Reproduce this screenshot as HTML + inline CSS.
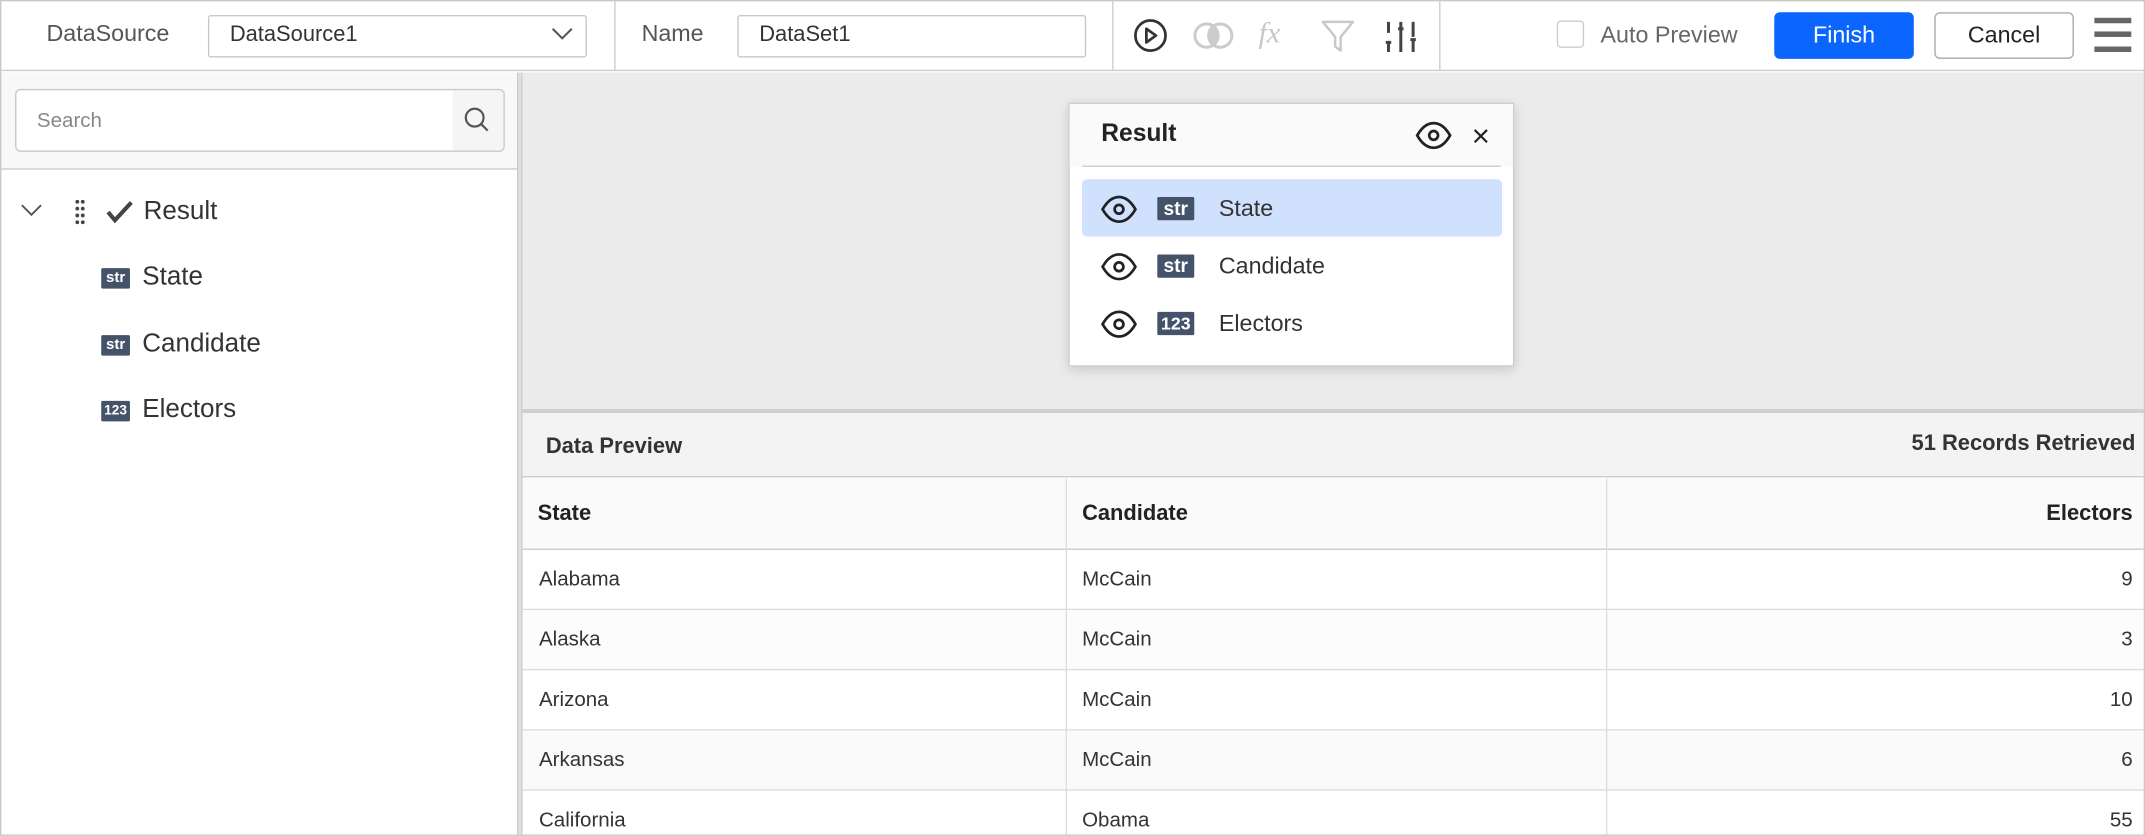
<!DOCTYPE html>
<html><head><meta charset="utf-8"><style>
*{box-sizing:border-box;margin:0;padding:0}
html,body{width:2145px;height:836px;overflow:hidden;background:#fff}
#w{position:absolute;left:0;top:0;width:1568px;height:611px;transform:scale(1.36798);transform-origin:0 0;font-family:"Liberation Sans",sans-serif;color:#333;border:1px solid #c8c8c8;overflow:hidden}
.a{position:absolute}
.badge{position:absolute;background:#44526a;color:#fff;font-size:11px;font-weight:bold;text-align:center;line-height:15px;border-radius:1px}
.row{position:absolute;left:0;width:1186px;height:44px;border-bottom:1px solid #ddd;font-size:15px;color:#333}
.row div{position:absolute;top:0;line-height:43px}
</style></head><body><div id="w">
<!-- toolbar -->
<div class="a" style="left:0;top:0;width:1568px;height:51px;border-bottom:1px solid #ccc;background:#fff"></div>
<div class="a" style="left:33px;top:14px;font-size:17px;color:#555">DataSource</div>
<div class="a" style="left:151px;top:10px;width:277px;height:31px;border:1px solid #c8c8c8;border-radius:2px"></div>
<div class="a" style="left:167px;top:16px;font-size:16px;color:#333">DataSource1</div>
<svg class="a" style="left:401px;top:18px" width="18" height="12"><path d="M2 2l7 7 7-7" fill="none" stroke="#555" stroke-width="1.5"/></svg>
<div class="a" style="left:448px;top:0;width:1px;height:51px;background:#ccc"></div>
<div class="a" style="left:468px;top:14px;font-size:17px;color:#555">Name</div>
<div class="a" style="left:538px;top:10px;width:255px;height:31px;border:1px solid #c8c8c8;border-radius:2px"></div>
<div class="a" style="left:554px;top:16px;font-size:16px;color:#333">DataSet1</div>
<div class="a" style="left:812px;top:0;width:1px;height:51px;background:#ccc"></div>
<svg class="a" style="left:827px;top:12px" width="28" height="28"><circle cx="13" cy="13" r="11" fill="none" stroke="#333" stroke-width="2"/><path d="M10 8l7 5-7 5z" fill="none" stroke="#333" stroke-width="2" stroke-linejoin="round"/></svg>
<svg class="a" style="left:871px;top:13px" width="32" height="24"><circle cx="10" cy="12" r="8.5" fill="none" stroke="#ccc" stroke-width="2.2"/><circle cx="20" cy="12" r="8.5" fill="none" stroke="#ccc" stroke-width="2.2"/><path d="M15 5a8.5 8.5 0 0 1 0 14a8.5 8.5 0 0 1 0-14z" fill="#ccc"/></svg>
<div class="a" style="left:919px;top:10px;font-family:'Liberation Serif',serif;font-style:italic;font-size:22px;color:#c8c8c8">fx</div>
<svg class="a" style="left:964px;top:13px" width="28" height="26"><path d="M2 2h22l-9 11v10l-4-3v-7z" fill="none" stroke="#c8c8c8" stroke-width="1.8" stroke-linejoin="round"/></svg>
<svg class="a" style="left:1010px;top:13px" width="26" height="26"><g stroke="#444" stroke-width="2.2" fill="none"><path d="M4 2v8M2 17h4M4 17v7M13 2v4M11 7h4M13 8v16M22 2v11M20 15h4M22 15v9"/></g></svg>
<div class="a" style="left:1051px;top:0;width:1px;height:51px;background:#ccc"></div>
<div class="a" style="left:1137px;top:14px;width:20px;height:20px;border:1.5px solid #ccc;border-radius:3px"></div>
<div class="a" style="left:1169px;top:15px;font-size:17px;color:#666">Auto Preview</div>
<div class="a" style="left:1296px;top:8px;width:102px;height:34px;background:#0a66ff;border-radius:4px;color:#fff;font-size:17px;text-align:center;line-height:33px">Finish</div>
<div class="a" style="left:1413px;top:8px;width:102px;height:34px;border:1px solid #aaa;border-radius:4px;color:#222;font-size:17px;text-align:center;line-height:32px">Cancel</div>
<div class="a" style="left:1530px;top:12px;width:27px;height:4px;background:#666"></div>
<div class="a" style="left:1530px;top:22px;width:27px;height:4px;background:#666"></div>
<div class="a" style="left:1530px;top:33px;width:27px;height:4px;background:#666"></div>
<!-- left panel -->
<div class="a" style="left:0;top:52px;width:378px;height:71px;background:#f8f8f8;border-bottom:1.5px solid #ccc"></div>
<div class="a" style="left:10px;top:64px;width:358px;height:46px;border:1px solid #c8c8c8;border-radius:4px;background:#fff;overflow:hidden"><div class="a" style="right:0;top:0;width:37px;height:46px;background:#f5f5f5"></div></div>
<div class="a" style="left:26px;top:79px;font-size:15px;color:#888">Search</div>
<svg class="a" style="left:337px;top:76px" width="22" height="22"><circle cx="9" cy="9" r="6.5" fill="none" stroke="#555" stroke-width="1.6"/><path d="M13.5 13.5l5 5" stroke="#555" stroke-width="1.6"/></svg>
<div class="a" style="left:377px;top:52px;width:4px;height:560px;background:#e0e0e0;border-left:1px solid #ccc;border-right:1px solid #ccc"></div>
<svg class="a" style="left:13px;top:146px" width="20" height="14"><path d="M2 3l7 7 7-7" fill="none" stroke="#555" stroke-width="1.4"/></svg>
<svg class="a" style="left:53px;top:144px" width="10" height="20"><g fill="#444"><circle cx="2.5" cy="2.5" r="1.4"/><circle cx="6.5" cy="2.5" r="1.4"/><circle cx="2.5" cy="7.5" r="1.4"/><circle cx="6.5" cy="7.5" r="1.4"/><circle cx="2.5" cy="12.5" r="1.4"/><circle cx="6.5" cy="12.5" r="1.4"/><circle cx="2.5" cy="17.5" r="1.4"/><circle cx="6.5" cy="17.5" r="1.4"/></g></svg>
<svg class="a" style="left:76px;top:144px" width="22" height="20"><path d="M2 10l5 6L19 3" fill="none" stroke="#444" stroke-width="3"/></svg>
<div class="a" style="left:104px;top:143px;font-size:19px;color:#333">Result</div>
<div class="badge" style="left:73px;top:195px;width:21px;height:15px">str</div>
<div class="a" style="left:103px;top:191px;font-size:19px">State</div>
<div class="badge" style="left:73px;top:244px;width:21px;height:15px">str</div>
<div class="a" style="left:103px;top:240px;font-size:19px">Candidate</div>
<div class="badge" style="left:73px;top:292px;width:21px;height:15px;font-size:10px">123</div>
<div class="a" style="left:103px;top:288px;font-size:19px">Electors</div>
<!-- canvas -->
<div class="a" style="left:381px;top:52px;width:1187px;height:246px;background:#ebebeb"></div>
<div class="a" style="left:381px;top:298px;width:1187px;height:3px;background:#d0d0d0"></div>
<div class="a" style="left:780px;top:74px;width:326px;height:193px;background:#fff;border:1px solid #ccc;box-shadow:0 2px 8px rgba(0,0,0,.15)"></div>
<div class="a" style="left:781px;top:75px;width:324px;height:46px;background:#fafafa"></div>
<div class="a" style="left:804px;top:86px;font-size:18px;font-weight:bold;color:#222">Result</div>
<svg class="a" style="left:1033px;top:86px" width="28" height="24"><path d="M2 12C6 5 10 3 14 3s8 2 12 9c-4 7-8 9-12 9S6 19 2 12z" fill="none" stroke="#222" stroke-width="2"/><circle cx="14" cy="12" r="3.2" fill="none" stroke="#222" stroke-width="2"/></svg>
<svg class="a" style="left:1075px;top:92px" width="14" height="14"><path d="M2 2l9 9M11 2l-9 9" stroke="#222" stroke-width="1.6"/></svg>
<div class="a" style="left:790px;top:120px;width:306px;height:1px;background:#ccc"></div>
<div class="a" style="left:790px;top:130px;width:307px;height:42px;background:#cfe1fd;border-radius:4px"></div>
<svg class="a" style="left:803px;top:140px" width="28" height="24"><path d="M2 12C6 5 10 3 14 3s8 2 12 9c-4 7-8 9-12 9S6 19 2 12z" fill="none" stroke="#222" stroke-width="2"/><circle cx="14" cy="12" r="3.2" fill="none" stroke="#222" stroke-width="2"/></svg>
<div class="badge" style="left:845px;top:143px;width:27px;height:17px;font-size:14px;line-height:17px">str</div>
<div class="a" style="left:890px;top:142px;font-size:17px">State</div>
<svg class="a" style="left:803px;top:182px" width="28" height="24"><path d="M2 12C6 5 10 3 14 3s8 2 12 9c-4 7-8 9-12 9S6 19 2 12z" fill="none" stroke="#222" stroke-width="2"/><circle cx="14" cy="12" r="3.2" fill="none" stroke="#222" stroke-width="2"/></svg>
<div class="badge" style="left:845px;top:185px;width:27px;height:17px;font-size:14px;line-height:17px">str</div>
<div class="a" style="left:890px;top:184px;font-size:17px">Candidate</div>
<svg class="a" style="left:803px;top:224px" width="28" height="24"><path d="M2 12C6 5 10 3 14 3s8 2 12 9c-4 7-8 9-12 9S6 19 2 12z" fill="none" stroke="#222" stroke-width="2"/><circle cx="14" cy="12" r="3.2" fill="none" stroke="#222" stroke-width="2"/></svg>
<div class="badge" style="left:845px;top:227px;width:27px;height:17px;font-size:13px;line-height:17px">123</div>
<div class="a" style="left:890px;top:226px;font-size:17px">Electors</div>
<!-- data preview -->
<div class="a" style="left:381px;top:301px;width:1187px;height:47px;background:#f3f3f3;border-bottom:1.5px solid #ccc"></div>
<div class="a" style="left:398px;top:317px;font-size:16px;font-weight:bold;color:#333">Data Preview</div>
<div class="a" style="right:6px;top:315px;font-size:16px;font-weight:bold;color:#333">51 Records Retrieved</div>
<div class="a" style="left:381px;top:349px;width:1187px;height:263px">
<div class="row" style="top:0;height:52px;background:#fafafa;font-weight:bold;font-size:16px;color:#222;border-bottom:1.5px solid #ccc"><div style="left:11px;line-height:52px">State</div><div style="left:409px;line-height:52px">Candidate</div><div style="right:9px;line-height:52px">Electors</div></div>
<div class="row" style="top:52px"><div style="left:12px">Alabama</div><div style="left:409px">McCain</div><div style="right:9px">9</div></div>
<div class="row" style="top:96px;background:#fcfcfc"><div style="left:12px">Alaska</div><div style="left:409px">McCain</div><div style="right:9px">3</div></div>
<div class="row" style="top:140px"><div style="left:12px">Arizona</div><div style="left:409px">McCain</div><div style="right:9px">10</div></div>
<div class="row" style="top:184px;background:#fafafa"><div style="left:12px">Arkansas</div><div style="left:409px">McCain</div><div style="right:9px">6</div></div>
<div class="row" style="top:228px"><div style="left:12px">California</div><div style="left:409px">Obama</div><div style="right:9px">55</div></div>
<div class="a" style="left:397px;top:0;width:1px;height:263px;background:#ddd"></div>
<div class="a" style="left:792px;top:0;width:1px;height:263px;background:#ddd"></div>
</div>
</div></body></html>
